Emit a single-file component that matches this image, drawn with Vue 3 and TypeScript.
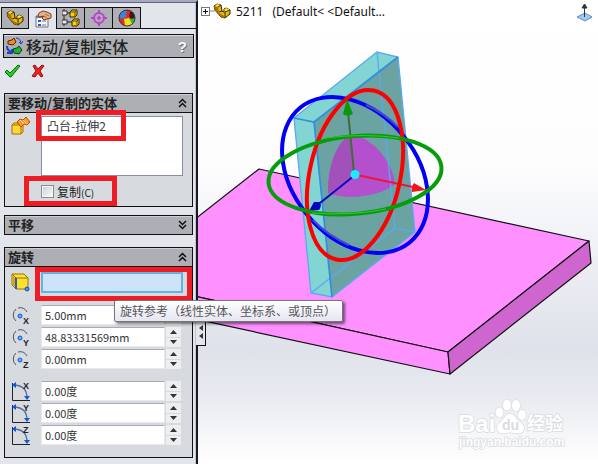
<script setup lang="ts">
import { ref } from 'vue'

interface NumberField {
  id: string
  axis: string
  label: string
  value: string
}

const tabs = ['特征树', '属性管理器', '配置管理器', '尺寸专家', '显示管理器']
const activeTab = ref(1)
const bodies = ref('凸台-拉伸2')
const copy = ref(false)
const reference = ref('')

const originFields = ref<NumberField[]>([
  { id: 'origin-x', axis: 'X', label: 'X 旋转原点', value: '5.00mm' },
  { id: 'origin-y', axis: 'Y', label: 'Y 旋转原点', value: '48.83331569mm' },
  { id: 'origin-z', axis: 'Z', label: 'Z 旋转原点', value: '0.00mm' },
])

const angleFields = ref<NumberField[]>([
  { id: 'angle-x', axis: 'X', label: 'X 旋转角度', value: '0.00度' },
  { id: 'angle-y', axis: 'Y', label: 'Y 旋转角度', value: '0.00度' },
  { id: 'angle-z', axis: 'Z', label: 'Z 旋转角度', value: '0.00度' },
])

function step(field: NumberField, delta: number) {
  const unit = field.value.replace(/^[-\d.]+/, '')
  field.value = (parseFloat(field.value) + delta).toFixed(2) + unit
}
</script>

<template>
  <div class="app">
    <aside class="panel">
      <nav class="tabs">
        <button
          v-for="(tab, i) in tabs"
          :key="tab"
          type="button"
          class="tab"
          :class="{ active: activeTab === i }"
          :aria-label="tab"
          @click="activeTab = i"
        >
          <svg v-if="i === 0" width="18" height="18" viewBox="0 0 18 18">
            <path d="M1 4l3-2 4 1 1 6 2 1V7l2-1 4 2v4l-5 4-4-1-6-7z" fill="#e9b70f" stroke="#2c2200" />
            <path d="M4 2l4 1-3 2-3-1zM13 6l4 2-3 2-3-2z" fill="#ffe23a" />
            <path d="M1 4l4 1 1 6 5 3v2l-3-1-6-7z" fill="#a87500" />
            <path d="M5 5l3-2M6 10l3-1M12 15v-5l5-2" fill="none" stroke="#3b2d00" />
          </svg>
          <svg v-else-if="i === 1" width="18" height="18" viewBox="0 0 18 18">
            <path d="M2 6h12v11H2z" fill="#f4f5f8" stroke="#6c7688" />
            <path d="M2 6h12v2H2z" fill="#6b7c98" />
            <path d="M4 10h3v2H4zM4 14h3v2H4z" fill="#315fc0" />
            <path d="M8 11h4M8 15h4" stroke="#70798a" />
            <path d="M5 3l4-2 4 1 4 2v4l-4 1-3 1-2-2 2-2-5 1-1-2z" fill="#e9b184" stroke="#754123" />
            <path d="M10 6l3 2M11 4l4 2" stroke="#aa6741" />
          </svg>
          <svg v-else-if="i === 2" width="18" height="18" viewBox="0 0 18 18">
            <path d="M2 0v17M2 4h7M2 13h9" fill="none" stroke="#222" />
            <path d="M0 2h5v4H0zM0 11h5v4H0z" fill="#e6e7ec" stroke="#333" />
            <path d="M8 3l2-2h5v5l-2 2H8zM10 12l2-2h5v5l-2 2h-5z" fill="#f7ce12" stroke="#332700" />
            <path d="M8 3h5v5M13 3l2-2M10 12h5v5M15 12l2-2" fill="none" stroke="#694d00" />
          </svg>
          <svg v-else-if="i === 3" width="18" height="18" viewBox="0 0 18 18">
            <circle cx="9" cy="9" r="5" fill="none" stroke="#b843cb" stroke-width="2" />
            <path d="M9 1v16M1 9h16" stroke="#b843cb" stroke-width="2" />
            <path d="M9 5v8M5 9h8" stroke="#ddd9e5" />
            <path d="M9 7v4M7 9h4" stroke="#9b31b1" />
          </svg>
          <svg v-else width="18" height="18" viewBox="0 0 18 18">
            <circle cx="9" cy="9" r="8" fill="#e42a1f" />
            <path d="M9 1a8 8 0 0 0-8 8l5 1 3-4z" fill="#3986db" />
            <path d="M9 1a8 8 0 0 1 7 4l-5 4-3-3z" fill="#e42a1f" />
            <path d="M1 9l5 1 3 7a8 8 0 0 1-8-8z" fill="#e42a1f" />
            <path d="M6 10l5-1 4 5a8 8 0 0 1-8 3z" fill="#f2dd23" />
            <path d="M11 9l6 0a8 8 0 0 1-3 6z" fill="#41b52f" />
            <path d="M12 3l3 0 2 6-4 1-2-3z" fill="#3d1620" />
            <circle cx="9" cy="9" r="8" fill="none" stroke="#3a3342" />
          </svg>
        </button>
      </nav>

      <header class="title">
        <svg width="17" height="18" viewBox="0 0 17 18">
          <path d="M2 4l4-1 2-2 2 4-3 3-5-1z" fill="#f58b15" stroke="#552600" />
          <path d="M7 12l4-1 2-2 3 4-3 4-5-1z" fill="#1eb32e" stroke="#064411" />
          <path d="M10 1q4 0 5 5M13 5l2 2 2-3" fill="none" stroke="#1c43c4" />
          <path d="M1 9q0 5 5 6M1 16h5v-4" fill="none" stroke="#1c43c4" stroke-width="2" />
        </svg>
        <h1>移动/复制实体</h1>
        <button type="button" class="help" aria-label="帮助">?</button>
      </header>

      <div class="actions">
        <button type="button" class="plain" aria-label="确定">
          <svg width="18" height="18" viewBox="0 0 18 18">
            <path d="M1 10l2-2 3 3 8-8 2 1-9 11H6z" fill="#26cc26" stroke="#087010" />
          </svg>
        </button>
        <button type="button" class="plain" aria-label="取消">
          <svg width="16" height="18" viewBox="0 0 16 18">
            <path d="M3 4l2-1 3 4 4-4 2 1-4 5 3 5-2 1-3-4-3 4-3-1 4-5z" fill="#e92622" stroke="#a30b0b" />
          </svg>
        </button>
      </div>

      <div class="sections">
        <section class="group">
          <h2>
            <span>要移动/复制的实体</span>
            <button type="button" class="plain" aria-label="折叠">
              <svg width="9" height="10" viewBox="0 0 9 10"><path d="M1 5l3.500-3.500L8 5M1 9l3.500-3.500L8 9" /></svg>
            </button>
          </h2>
          <div class="bodies">
            <label for="bodies" aria-label="要移动的实体">
              <svg width="20" height="20" viewBox="0 0 20 20">
                <path d="M1 9l2-2h9v9l-2 2H1z" fill="#ffd836" stroke="#a56c00" />
                <path d="M1 9h9v9M10 9l2-2" fill="none" stroke="#a56c00" />
                <path d="M6 6l3-3 3 1 3-3 4 5-3 3-3-1-3 3z" fill="#ff9b24" stroke="#b55400" />
                <path d="M9 4l4 4M12 4l4 4" stroke="#ffd9a0" />
              </svg>
            </label>
            <div class="field marked">
              <textarea id="bodies" v-model="bodies" spellcheck="false"></textarea>
              <i class="mark mark-body"></i>
            </div>
          </div>
          <div class="copy marked">
            <input id="copy" v-model="copy" type="checkbox" />
            <label for="copy">复制<span>(C)</span></label>
            <i class="mark mark-copy"></i>
          </div>
        </section>

        <section class="group collapsed">
          <h2>
            <span>平移</span>
            <button type="button" class="plain" aria-label="展开">
              <svg width="9" height="10" viewBox="0 0 9 10"><path d="M1 1l3.500 3.500L8 1M1 5l3.500 3.500L8 5" /></svg>
            </button>
          </h2>
        </section>

        <section class="group rotation">
          <h2>
            <span>旋转</span>
            <button type="button" class="plain" aria-label="折叠">
              <svg width="9" height="10" viewBox="0 0 9 10"><path d="M1 5l3.500-3.500L8 5M1 9l3.500-3.500L8 9" /></svg>
            </button>
          </h2>
          <div class="reference">
            <label for="reference" aria-label="旋转参考">
              <svg width="20" height="20" viewBox="0 0 20 20">
                <path d="M1 2h12l4 4v11H5l-4-4z" fill="#ffe22e" stroke="#9b7100" />
                <path d="M1 2l4 4h12" fill="none" stroke="#9b7100" />
                <path d="M2 4l3 3v9l-3-3z" fill="#dba900" />
                <path d="M5 6v11" stroke="#2857d8" stroke-width="2" />
                <circle cx="16" cy="17" r="2" fill="#3b9dff" stroke="#124caf" />
              </svg>
            </label>
            <div class="field marked">
              <input id="reference" v-model="reference" class="highlight" type="text" />
              <i class="mark mark-reference"></i>
            </div>
          </div>
          <div class="rows">
            <div v-for="field in originFields" :key="field.id" class="row">
              <label :for="field.id" :aria-label="field.label">
                <svg width="20" height="20" viewBox="0 0 20 20">
                  <path d="M5 16A8 8 0 0 1 5 4M7 3a8 8 0 0 1 9 4" fill="none" stroke="#515560" />
                  <circle cx="9" cy="11" r="2" fill="#58b5ff" stroke="#1454d6" />
                  <text x="12" y="19">{{ field.axis }}</text>
                </svg>
              </label>
              <input :id="field.id" v-model="field.value" type="text" />
              <div class="spin">
                <button type="button" aria-label="增加" @click="step(field, 1)"><svg width="7" height="4" viewBox="0 0 7 4"><path d="M0 4l3.500-4L7 4z" /></svg></button>
                <button type="button" aria-label="减少" @click="step(field, -1)"><svg width="7" height="4" viewBox="0 0 7 4"><path d="M0 0l3.500 4L7 0z" /></svg></button>
              </div>
            </div>
          </div>
          <div class="rows">
            <div v-for="field in angleFields" :key="field.id" class="row">
              <label :for="field.id" :aria-label="field.label">
                <svg width="20" height="20" viewBox="0 0 20 20">
                  <path d="M1.500 2v17.500H19" fill="none" stroke="#222" />
                  <path d="M4 4q12 1 12 13" fill="none" stroke="#53719f" stroke-width="1.300" />
                  <path d="M1 4l4-3v6zM16 19l-3-4h6z" fill="#1457df" />
                  <text x="12" y="8">{{ field.axis }}</text>
                </svg>
              </label>
              <input :id="field.id" v-model="field.value" type="text" />
              <div class="spin">
                <button type="button" aria-label="增加" @click="step(field, 1)"><svg width="7" height="4" viewBox="0 0 7 4"><path d="M0 4l3.500-4L7 4z" /></svg></button>
                <button type="button" aria-label="减少" @click="step(field, -1)"><svg width="7" height="4" viewBox="0 0 7 4"><path d="M0 0l3.500 4L7 0z" /></svg></button>
              </div>
            </div>
          </div>
          <div class="tooltip" role="tooltip">旋转参考（线性实体、坐标系、或顶点）</div>
        </section>
      </div>

      <button type="button" class="handle" aria-label="收起面板">
        <svg width="4" height="14" viewBox="0 0 4 14"><path d="M4 0v6L0 3zM4 8v6l-4-3z" fill="#333" /></svg>
      </button>
    </aside>

    <main class="viewport">
      <svg class="scene" viewBox="198 0 400 464" preserveAspectRatio="xMinYMin slice">
        <g stroke="#111" stroke-width="1.200" stroke-linejoin="round">
          <path d="M190 223L259 169 589 241 448 352 190 295z" fill="#ff90ff" />
          <path d="M190 295L448 352 450 374 190 318z" fill="#ff90ff" />
          <path d="M589 241l2 22-141 111-2-22z" fill="#cf66cf" />
        </g>
        <path d="M294 118L377 52 398 57 314 122z" fill="#82d5d2" />
        <path d="M294 118l20 4 18 175-21-4z" fill="#82d5d2" />
        <path d="M314 122L398 57 415 232 332 297z" fill="#6ba2a2" />
        <path d="M328 193C328 158 341 138 354 135 374 139 393 163 395 184 384 194 351 202 328 193z" fill="#b450ce" />
        <path d="M328 193C328 158 341 138 351 135L354 174 329 193z" fill="#a250ba" />
        <g fill="none" stroke="#58aaf3" stroke-width="1.300">
          <path d="M294 118L377 52 398 57 415 232 332 297 311 293z" />
          <path d="M377 52l18 176 20 4M395 228L311 293" />
          <path d="M294 118l20 4L398 57M314 122l18 175" stroke="#318ee0" stroke-width="1.700" />
        </g>
        <path d="M354 172L348 112" stroke="#3c6d35" stroke-width="2" />
        <path d="M355 175L320 203" stroke="#0808bd" stroke-width="2" />
        <path d="M309 211l5-9 6 0q2 4-1 8z" fill="#0505bd" />
        <path d="M357 175l56 12" stroke="#ed1542" stroke-width="2" />
        <g fill="none">
          <ellipse cx="355" cy="175" rx="86.800" ry="62.200" transform="rotate(51 355 175)" stroke="#0000f5" stroke-width="4" />
          <path d="M366 105q18 8 32 22M313 220q14 15 36 25" stroke="#4548d2" stroke-width="2" />
          <ellipse cx="355" cy="175" rx="86.500" ry="45.300" transform="rotate(-77.500 355 175)" stroke="#f00" stroke-width="4" />
          <ellipse cx="355" cy="175" rx="86.800" ry="38.800" transform="rotate(-5.400 355 175)" stroke="#079c0b" stroke-width="4" />
          <path d="M325 138q39-5 74 0M312 213q40 3 74-4" stroke="#31c837" />
        </g>
        <path d="M347 99l6 15q-6 3-10 0z" fill="#079a0b" />
        <path d="M426 190l-14 2q-1-5 2-9z" fill="#ef1717" />
        <circle cx="355" cy="174.500" r="4.500" fill="#1beaff" />
        <g class="logo" fill="#fff" stroke="#d9dce2" stroke-width="1.600" paint-order="stroke" stroke-linejoin="round">
          <text x="458" y="432" font-size="24" font-weight="700">Bai</text>
          <ellipse cx="499.500" cy="412.500" rx="4" ry="5" />
          <ellipse cx="507" cy="405" rx="4" ry="5.500" />
          <ellipse cx="516" cy="405.500" rx="4" ry="5.500" />
          <ellipse cx="522" cy="415" rx="4" ry="5" />
          <path d="M510 414q4 0 6 4c3 4 8 6 8 10 0 5-5 6-9 5q-5-1-10 0c-5 1-8-1-8-5 0-5 5-6 7-10q2-4 6-4z" />
          <text x="502" y="430" font-size="14" font-weight="700" class="du">du</text>
          <text x="527" y="430" font-size="18" font-weight="700">经验</text>
          <text x="459" y="446" font-size="12" font-weight="700">jingyan.baidu.com</text>
        </g>
      </svg>
      <div class="tree">
        <button type="button" class="expand" aria-label="展开"></button>
        <svg width="21" height="18" viewBox="0 0 21 18">
          <path d="M0 9h5" stroke="#888" />
          <path d="M4 4l3-2 4 1 1 6 2 1V7l2-1 4 2v4l-5 4-4-1-6-7z" fill="#e9b70f" stroke="#2c2200" />
          <path d="M7 2l4 1-3 2-3-1zM16 6l4 2-3 2-3-2z" fill="#ffe23a" />
          <path d="M4 4l4 1 1 6 5 3v2l-3-1-6-7z" fill="#a87500" />
          <path d="M8 5l3-2M9 10l3-1M15 15v-5l5-2" fill="none" stroke="#3b2d00" />
        </svg>
        <span class="name">5211</span>
        <span>(Default&lt; &lt;Default...</span>
        <svg class="orient" width="18" height="20" viewBox="0 0 18 20">
          <path d="M1 15l8-4 7 4-7 4z" fill="#9dccf5" stroke="#608fbd" />
          <path d="M8.500 15V3M6 6l2.500-4L11 6z" fill="#333" stroke="#333" />
        </svg>
      </div>
    </main>
  </div>
</template>

<style>
body {
  margin: 0;
}
</style>

<style scoped>
.app {
  display: grid;
  grid-template-columns: 198px 1fr;
  min-height: 100vh;
  font-family: "Noto Sans CJK SC", sans-serif;
  font-size: 12px;
  color: #222;
}
.app * {
  box-sizing: border-box;
}
button {
  padding: 0;
  border: 0;
  background: none;
}
svg {
  display: block;
}
.panel {
  position: relative;
  z-index: 1;
  background: #e2e5eb;
  border-top: 2px solid #a7a7be;
  border-right: 2px solid #191a20;
  box-shadow: inset 0 1px #626381, inset -1px 0 #c2c5cd;
}
.tabs {
  display: flex;
  height: 27px;
  padding: 5px 0 0 1px;
  border-bottom: 1px solid #111;
}
.tab {
  display: grid;
  place-items: center;
  width: 28px;
  height: 21px;
  border: 1px solid #111;
  border-left-width: 0;
  border-bottom: 0;
  background: #aeb0b6;
}
.tab:first-child {
  border-left-width: 1px;
}
.tab.active {
  height: 22px;
  background: #e2e5eb;
}
.title {
  display: flex;
  align-items: center;
  gap: 3px;
  height: 24px;
  margin: 5px 2px 0 3px;
  padding: 0 6px 0 2px;
  border: 1px solid #111;
  background: #adafb4;
  box-shadow: inset 0 1px #d7d8dc;
}
h1 {
  margin: 0;
  font-size: 16px;
  line-height: 22px;
  font-weight: 500;
}
.help {
  margin-left: auto;
  font: 700 15px "Liberation Sans", sans-serif;
  color: #f5f5f5;
  text-shadow: 1px 1px #777;
}
.actions {
  display: flex;
  gap: 8px;
  padding: 4px 4px 0;
}
.sections {
  display: grid;
  gap: 8px;
  padding: 13px 3px 0 4px;
}
.group {
  position: relative;
  border: 1px solid #111;
  background: #d7dade;
}
h2 {
  display: flex;
  align-items: center;
  justify-content: space-between;
  height: 19px;
  margin: 0;
  padding: 0 5px 0 3px;
  border-bottom: 1px solid #111;
  background: #adafb4;
  box-shadow: inset 0 1px #ccced2;
  font-size: 13px;
  line-height: 18px;
  font-weight: 700;
}
h2 path {
  fill: none;
  stroke: #111;
  stroke-width: 1.5;
}
.collapsed h2 {
  height: 18px;
  border-bottom: 0;
}
.bodies,
.reference {
  display: grid;
  grid-template-columns: 30px 142px;
  padding: 3px 0 0 6px;
}
.marked {
  position: relative;
}
.mark {
  position: absolute;
  border: 5px solid #ee1c25;
  pointer-events: none;
}
.mark-body {
  left: -5px;
  top: -6px;
  width: 90px;
  height: 31px;
}
.mark-copy {
  left: 19px;
  top: 0;
  width: 93px;
  height: 30px;
}
.mark-reference {
  left: -6px;
  top: -5px;
  width: 157px;
  height: 34px;
}
textarea {
  display: block;
  width: 100%;
  height: 60px;
  padding: 0 5px;
  border: 1px solid #8490a2;
  border-radius: 0;
  outline: 0;
  resize: none;
  background: #fff;
  color: #334;
  font: inherit;
  line-height: 18px;
}
.copy {
  display: flex;
  align-items: center;
  gap: 3px;
  height: 30px;
  padding-left: 36px;
}
.copy span {
  font-size: 10px;
}
.copy input {
  appearance: none;
  width: 13px;
  height: 13px;
  margin: 0;
  border: 1px solid #8a8d94;
  background: linear-gradient(135deg, #c7cbd2, #fff);
  box-shadow: inset 0 0 0 1px #f4f4f4;
}
.rotation {
  margin-top: 4px;
  padding-bottom: 12px;
}
.reference {
  padding-top: 5px;
}
.highlight {
  display: block;
  width: 100%;
  height: 21px;
  border: 2px solid #64b2e6;
  border-radius: 0;
  outline: 0;
  background: #cfe3f8;
}
.rows {
  display: grid;
  gap: 2px;
  padding: 12px 0 0 6px;
}
.row {
  display: grid;
  grid-template-columns: 30px 124px 16px;
  height: 20px;
}
.row text {
  font: 700 9px "Liberation Sans", sans-serif;
  fill: #222;
}
.row > input {
  min-width: 0;
  padding: 0 3px;
  border: 1px solid #e7e9ec;
  border-top-color: #a6abb4;
  border-radius: 0;
  background: #fff;
  color: #333;
  font: inherit;
  font-size: 11px;
}
.spin {
  display: grid;
  gap: 1px;
  padding-left: 1px;
}
.spin button {
  display: grid;
  place-items: center;
  background: #edeef0;
}
.spin path {
  fill: #333;
}
.tooltip {
  position: absolute;
  z-index: 2;
  left: 109px;
  top: 52px;
  height: 22px;
  padding: 0 6px 0 5px;
  border: 1px solid #767676;
  border-radius: 2px;
  background: linear-gradient(#fff, #e5e6f1);
  box-shadow: 2px 2px 3px #0008;
  color: #575757;
  line-height: 20px;
  white-space: nowrap;
}
.handle {
  position: absolute;
  left: 196px;
  top: 302px;
  display: grid;
  align-items: end;
  justify-items: center;
  width: 10px;
  height: 42px;
  padding-bottom: 6px;
  border-right: 1px solid #111;
  border-bottom: 1px solid #111;
  background: #e2e5eb;
}
.viewport {
  position: relative;
  overflow: hidden;
  background: linear-gradient(#fff 0%, #fdfdfe 35%, #dfe2ea 75%, #e8eaf0 85%, #fbfbfc 97%, #fff 100%);
}
.scene {
  width: 100%;
  height: 100vh;
}
.logo text {
  font-family: "Liberation Sans", "Noto Sans CJK SC", sans-serif;
}
.logo .du {
  fill: #d9dce2;
  stroke: none;
}
.tree {
  position: absolute;
  inset: 0 0 auto;
  display: flex;
  align-items: center;
  height: 22px;
  padding-left: 3px;
  font-family: "Noto Sans", sans-serif;
  color: #111;
}
.expand {
  width: 9px;
  height: 9px;
  border: 1px solid #777;
  background: linear-gradient(#111, #111) center / 5px 1px no-repeat, linear-gradient(#111, #111) center / 1px 5px no-repeat, #fff;
}
.name {
  margin: 0 9px 0 5px;
}
.orient {
  align-self: end;
  margin: 0 4px 0 auto;
}
</style>
